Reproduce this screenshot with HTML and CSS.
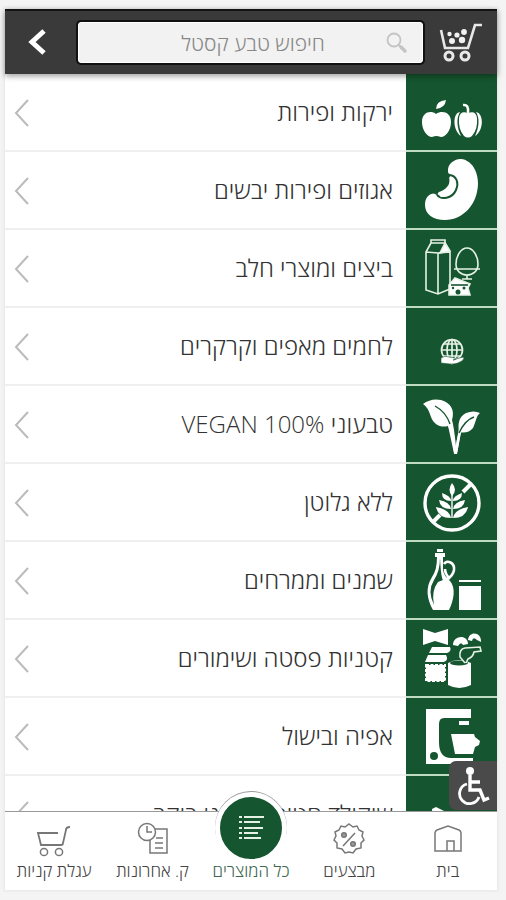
FILE: index.html
```html
<!DOCTYPE html>
<html lang="he" dir="rtl">
<head>
<meta charset="utf-8">
<meta name="viewport" content="width=device-width, initial-scale=1">
<title>טבע קסטל</title>
<link rel="stylesheet" href="styles.css">
</head>
<body>
<div class="app">
  <header class="header">
    <a class="cart" href="#" aria-label="עגלה">
      <svg width="44" height="42" viewBox="0 0 44 42" fill="none" stroke="#e8e8e8" stroke-width="2.6">
        <path d="M2 8 6 26H29L36 3H43"/>
        <g stroke-width="3"><circle cx="10" cy="34" r="4"/><circle cx="26" cy="34" r="4"/></g>
        <g fill="#f2f2f2" stroke="none"><circle cx="10.500" cy="12" r="2.200"/><circle cx="18" cy="13" r="2.600"/><circle cx="25" cy="10" r="2.900"/><circle cx="13" cy="19" r="3"/><circle cx="23" cy="18" r="3.200"/></g>
      </svg>
    </a>
    <form class="search" role="search">
      <svg class="search-icon" width="22" height="22" viewBox="0 0 22 22" fill="none" stroke="#c4c4c4">
        <circle cx="8" cy="8" r="6.500" stroke-width="1.800"/><path d="M12.500 13 15 15" stroke-width="2"/><path d="M15 15 19 19" stroke-width="3.500" stroke-linecap="round"/>
      </svg>
      <input class="search-input" type="search" placeholder="חיפוש טבע קסטל" aria-label="חיפוש">
    </form>
    <button class="back" type="button" aria-label="חזרה">
      <svg width="20" height="28" viewBox="0 0 20 28" fill="none" stroke="#fff" stroke-width="5"><path d="M17 2 5 13 17 24"/></svg>
    </button>
  </header>

  <main class="list">
    <a class="row" href="#">
      <span class="tile"><svg viewBox="0 0 90 76" fill="#fff">
        <path d="M29 40C24 36 15 38 15 48C15 56 20 63 25 63Q28 62 29 62Q31 62 34 63C39 63 44 56 44 48C44 38 35 36 29 40Z"/>
        <path d="M29 35Q29 27 39 26Q38 34 29 35Z"/>
        <path d="M61 39Q53 36 52 44Q51 55 57 62Q61 65 65 62Q71 55 70 44Q69 36 61 39Z"/>
        <path d="M53 38C45 39 46 57 54 62C50 54 49 44 53 38ZM69 38C77 39 77 57 68 62C72 54 73 44 69 38Z"/>
        <path d="M61 39Q62 30 56 31" fill="none" stroke="#fff" stroke-width="2.500"/>
      </svg></span>
      <span class="name">ירקות ופירות</span>
      <svg class="chev" viewBox="0 0 16 28"><path d="M14 1 2 14 14 27"/></svg>
    </a>
    <a class="row" href="#">
      <span class="tile"><svg viewBox="0 0 90 76" fill="#fff">
        <path d="M42 23C38 13 47 7 54 7C65 8 71 20 71 31C71 52 56 68 38 68C26 68 18 62 18 53C18 44 24 40 30 42C42 43 52 33 42 23Z"/>
        <path d="M41 23C50 23 52 31 49 38C45 47 34 48 30 43" fill="#fff" stroke="#15552f" stroke-width="2"/>
        <path d="M42 21C45 29 42 38 29 41L33 44Q24 42 26 36L38 24Z" fill="#15552f"/>
        <path d="M42 25C47 27 47 32 45 36C43 41 38 43 31 42C41 39 44 34 42 25Z"/>
      </svg></span>
      <span class="name">אגוזים ופירות יבשים</span>
      <svg class="chev" viewBox="0 0 16 28"><path d="M14 1 2 14 14 27"/></svg>
    </a>
    <a class="row" href="#">
      <span class="tile"><svg viewBox="0 0 90 76" fill="none" stroke="#e6f2e6" stroke-width="1.600">
        <path d="M24 10H38V13H24ZM24 13 19 22V60L31 64 43 59V22L38 13M19 22 31 23 43 22M31 23V64"/>
        <path d="M38 13 33 23 43 21Z" fill="#fff"/>
        <path d="M60 18C54 18 49 26 49 34C49 41 54 45 60 45S71 41 71 34C71 26 66 18 60 18ZM47 39H73M60 45V49M55 49H65"/>
        <path d="M42 55 48 48 63 54 61 58 63 65H42Z" fill="#fff"/>
        <path d="M44 55H61" stroke="#15552f"/>
        <g fill="#15552f" stroke="none"><circle cx="51" cy="62" r="2.500"/><circle cx="46" cy="58" r="1.200"/><circle cx="57" cy="58" r="1.500"/></g>
      </svg></span>
      <span class="name">ביצים ומוצרי חלב</span>
      <svg class="chev" viewBox="0 0 16 28"><path d="M14 1 2 14 14 27"/></svg>
    </a>
    <a class="row" href="#">
      <span class="tile"><svg viewBox="0 0 90 76" fill="none" stroke="#e6f2e6" stroke-width="1.700">
        <circle cx="45" cy="42" r="10.500"/><ellipse cx="45" cy="42" rx="5" ry="10.500"/><path d="M45 31V52M34 42H56M36 36H54M36 48H54"/>
        <path d="M34 50Q38 47 42 49L48 50Q50 52 46 52L56 49Q58 50 55 53Q49 57 43 56L34 55Z" fill="#fff" stroke="#15552f" stroke-width=".6"/>
      </svg></span>
      <span class="name">לחמים מאפים וקרקרים</span>
      <svg class="chev" viewBox="0 0 16 28"><path d="M14 1 2 14 14 27"/></svg>
    </a>
    <a class="row" href="#">
      <span class="tile"><svg viewBox="0 0 90 76" fill="#fff">
        <path d="M16 18Q24 12 34 14C44 17 48 24 45 34Q47 41 49 60Q50 48 55 42L58 37 54 46 50 68H47Q46 50 41 40C34 42 27 39 24 31Q21 21 16 18Z"/>
        <path d="M73 27Q67 24 59 27C51 31 51 39 52 46Q61 48 66 42C69 36 69 30 73 27Z"/>
        <path d="M42 38 48 66M53 44 49 66" stroke="#fff" stroke-width="2.600"/>
        <path d="M28 20Q39 26 43 38M67 31Q58 34 52 47" fill="none" stroke="#15552f" stroke-width="1.400"/>
      </svg></span>
      <span class="name">טבעוני <bdi>VEGAN 100%</bdi></span>
      <svg class="chev" viewBox="0 0 16 28"><path d="M14 1 2 14 14 27"/></svg>
    </a>
    <a class="row" href="#">
      <span class="tile"><svg viewBox="0 0 90 76" fill="#fff">
        <circle cx="45" cy="39" r="27" fill="none" stroke="#fff" stroke-width="3.400"/>
        <path d="M56 28 64 20M26 58 33 51" stroke="#fff" stroke-width="4"/>
        <path d="M45 19Q51 26 45 32Q40 26 45 19ZM44 37Q44 32 35 29Q35 37 44 37ZM46 37Q46 32 55 29Q55 37 46 37ZM44 45Q43 38 32 36Q33 45 44 45ZM46 45Q47 38 58 36Q57 45 46 45ZM44 54Q42 45 29 43Q31 54 44 54ZM46 54Q48 45 61 43Q59 54 46 54Z"/>
        <path d="M45 30V54" stroke="#fff" stroke-width="1.400"/>
      </svg></span>
      <span class="name">ללא גלוטן</span>
      <svg class="chev" viewBox="0 0 16 28"><path d="M14 1 2 14 14 27"/></svg>
    </a>
    <a class="row" href="#">
      <span class="tile"><svg viewBox="0 0 90 76" fill="#fff">
        <path d="M28 11H38V15H36V28Q37 34 43 39C49 46 47 58 42 68H26C20 57 18 46 25 35Q30 28 30 15H28ZM30 7H36V10H30Z"/>
        <path d="M33 16Q33 29 27 38Q20 49 27 63Q24 49 31 40L36 38Q34 36 33 16Z" fill="#15552f"/>
        <path d="M37 22C40 17 48 21 47 28Q46 34 40 37M38 27Q38 32 43 37" fill="none" stroke="#fff" stroke-width="2.600"/>
        <path d="M52 38H74V40H52ZM52 44H74V68H52Z"/>
      </svg></span>
      <span class="name">שמנים וממרחים</span>
      <svg class="chev" viewBox="0 0 16 28"><path d="M14 1 2 14 14 27"/></svg>
    </a>
    <a class="row" href="#">
      <span class="tile"><svg viewBox="0 0 90 76" fill="#fff">
        <path d="M16 9 28 13 41 9V25L28 21 16 25ZM25 27H43Q45 31 40 33H22ZM21 35H39Q42 40 37 42H18Z"/>
        <path d="M19 45H38V61H19Z" stroke="#fff" stroke-width="2" stroke-dasharray="3 1.500"/>
        <path d="M46 25C46 15 61 14 61 24L56 25Q54 21 51 26ZM61 20C62 10 75 12 74 22L70 20Q66 16 65 21Z"/>
        <path d="M41 43V65Q52 71 64 65V43Q52 37 41 43Z"/><ellipse cx="52" cy="43" rx="9" ry="2.500" fill="#15552f"/>
        <path d="M58 43 53 37Q52 29 58 28L73 27 74 31 67 32Q66 37 61 39L59 43" fill="#15552f" stroke="#e6f2e6" stroke-width="1.600"/>
      </svg></span>
      <span class="name">קטניות פסטה ושימורים</span>
      <svg class="chev" viewBox="0 0 16 28"><path d="M14 1 2 14 14 27"/></svg>
    </a>
    <a class="row" href="#">
      <span class="tile"><svg viewBox="0 0 90 76" fill="#fff">
        <path d="M19 11H64V20H37Q32 20 32 26V44Q32 60 44 60H66V66H19Z"/>
        <circle cx="27" cy="58" r="4" fill="#15552f"/>
        <path d="M52 23H62V27H52ZM44 36H67L68 39 73 43 72 47 68 49 66 56H48Z"/>
      </svg></span>
      <span class="name">אפיה ובישול</span>
      <svg class="chev" viewBox="0 0 16 28"><path d="M14 1 2 14 14 27"/></svg>
    </a>
    <a class="row" href="#">
      <span class="tile"><svg viewBox="0 0 90 76" fill="#fff">
        <path d="M25 33 29 31 37 35 40 50H26Z"/>
      </svg></span>
      <span class="name">שוקולד חטיפים ודגני בוקר</span>
      <svg class="chev" viewBox="0 0 16 28"><path d="M14 1 2 14 14 27"/></svg>
    </a>
    <button class="access" type="button" aria-label="נגישות">
      <svg width="34" height="40" viewBox="0 0 34 40" fill="none" stroke="#fff" stroke-width="3.400">
        <circle cx="14" cy="5" r="4" fill="#fff" stroke="none"/>
        <path d="M14 9V24H24L28 34 33 32M14 16H24"/><path d="M11 18A10 10 0 1 0 23 31" stroke-width="2.800"/>
      </svg>
    </button>
  </main>

  <nav class="nav">
    <a class="nav-item" href="#">
      <svg width="36" height="36" viewBox="0 0 36 36"><path d="M5 12Q5 10 7 9L18 5 29 9Q31 10 31 12V30H5ZM17 30V20H24V30"/></svg>
      <span>בית</span>
    </a>
    <a class="nav-item" href="#">
      <svg width="36" height="36" viewBox="0 0 36 36"><path d="M18 3 22 6 26 5 28 9 32 11 31 15 33 19 30 22 30 27 25 28 22 32 18 31 14 32 11 28 6 27 6 22 3 19 5 15 4 11 8 9 10 5 14 6Z"/><path d="M24 12 12 25"/><g fill="#999"><circle cx="13" cy="14" r="2.300"/><circle cx="22" cy="23" r="2.300"/></g></svg>
      <span>מבצעים</span>
    </a>
    <a class="nav-item active" href="#">
      <span class="bubble"><svg width="28" height="28" viewBox="0 0 28 28"><path d="M2 3H5M7 3H27M2 8H5M7 8H23M2 14H5M7 14H26M2 19H5M7 19H21M2 24H5M7 24H24"/></svg></span>
      <span>כל המוצרים</span>
    </a>
    <a class="nav-item" href="#">
      <svg width="36" height="36" viewBox="0 0 36 36"><path d="M20 8H32V32H15V19M21 17H28M20 22H28M20 27H28"/><circle cx="12" cy="11" r="8.500"/><path d="M12 5V11H17"/></svg>
      <span>ק. אחרונות</span>
    </a>
    <a class="nav-item" href="#">
      <svg width="36" height="36" viewBox="0 0 36 36"><path d="M22 12H2L5 24H25Q27 24 27 22L30 9Q30 6 34 6" stroke-width="1.800"/><circle cx="8" cy="31" r="3.600"/><circle cx="23" cy="31" r="3.600"/></svg>
      <span>עגלת קניות</span>
    </a>
  </nav>
</div>
</body>
</html>
```
FILE: styles.css
```css
* {
  box-sizing: border-box;
}

body {
  margin: 0;
  padding: 9px 9px 10px 5px;
  height: 100vh;
  background: #f4f4f4;
  font-family: "Open Sans", "Noto Sans", "DejaVu Sans", sans-serif;
  font-weight: 300;
}

a {
  color: inherit;
  text-decoration: none;
}

button {
  border: 0;
  padding: 0;
  background: none;
}

svg {
  display: block;
}

.app {
  display: flex;
  flex-direction: column;
  height: 100%;
  background: #fff;
  box-shadow: 0 0 3px 1px #e6e6e6;
}

.header {
  display: flex;
  align-items: center;
  flex: none;
  height: 65px;
  padding: 0 14px;
  background: #3a3a3a;
  border-top: 2px solid #141414;
  box-shadow: 0 2px 6px rgba(0, 0, 0, 0.4);
  z-index: 1;
}

.search {
  display: flex;
  align-items: center;
  flex: 1;
  height: 41px;
  margin: 0 16px 0 23px;
  padding: 0 14px;
  background: #f2f2f2;
  border: 1px solid #fff;
  border-radius: 3px;
  box-shadow: 0 0 0 2px #111;
}

.search-icon {
  flex: none;
}

.search-input {
  flex: 1;
  min-width: 0;
  padding: 0 0 0 8px;
  border: 0;
  background: none;
  font: inherit;
  font-size: 21px;
  text-align: center;
}

.search-input::placeholder {
  color: #888;
  opacity: 1;
}

.back {
  display: flex;
  justify-content: center;
  width: 36px;
}

.list {
  position: relative;
  flex: 1;
  min-height: 0;
  overflow: hidden;
}

.row {
  display: flex;
  align-items: stretch;
  height: 78px;
}

.tile {
  flex: none;
  width: 91px;
  background: #15552f;
  border-bottom: 2px solid #bfdcc0;
}

.tile svg {
  width: 90px;
  height: 76px;
}

.name {
  flex: 1;
  padding-right: 13px;
  line-height: 76px;
  border-bottom: 2px solid #efefef;
  font-size: 24px;
  color: #333;
  white-space: nowrap;
}

.chev {
  width: 33px;
  height: 78px;
  padding: 25px 8px 23px 9px;
  border-bottom: 2px solid #efefef;
  fill: none;
  stroke: #bbb;
  stroke-width: 2;
}

.access {
  position: absolute;
  right: 0;
  bottom: 1px;
  display: flex;
  align-items: center;
  justify-content: center;
  width: 48px;
  height: 49px;
  background: #4a4a4a;
  border-radius: 7px 0 0 7px;
}

.nav {
  position: relative;
  display: flex;
  flex: none;
  height: 79px;
  background: #fff;
  border-top: 1px solid #999;
}

.nav-item {
  display: flex;
  flex: 1;
  flex-direction: column;
  align-items: center;
  padding-top: 9px;
  font-size: 17px;
  line-height: 28px;
  color: #444;
  white-space: nowrap;
}

.nav-item svg {
  fill: none;
  stroke: #777;
  stroke-width: 1.5;
}

.active {
  color: #3c6650;
}

.bubble {
  display: flex;
  align-items: center;
  justify-content: center;
  width: 72px;
  height: 72px;
  margin-top: -29px;
  margin-bottom: -7px;
  background: #15552f;
  border: 5px solid #fff;
  border-radius: 50%;
  box-shadow: 0 -1px 0 #999;
}

.nav-item .bubble svg {
  stroke: #e6f2e6;
  stroke-width: 2;
}
```
